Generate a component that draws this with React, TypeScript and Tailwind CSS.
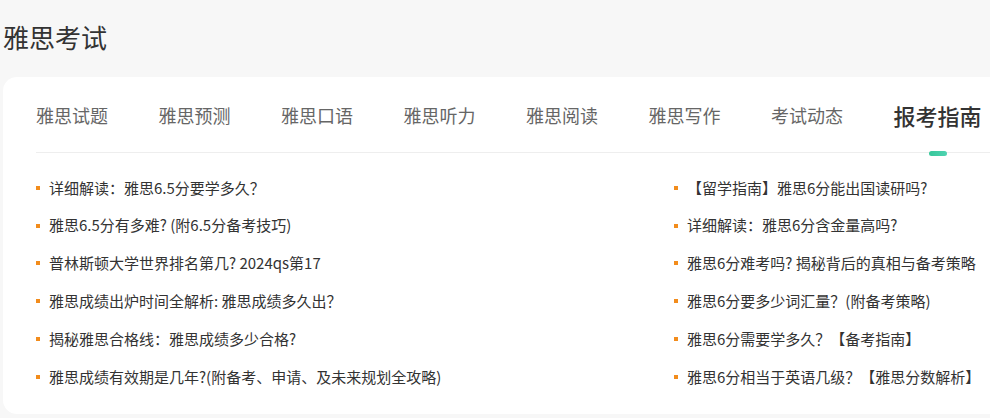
import React from "react";

const tabs = ["雅思试题", "雅思预测", "雅思口语", "雅思听力", "雅思阅读", "雅思写作", "考试动态", "报考指南"];

const left = [
  "详细解读：雅思6.5分要学多久？",
  "雅思6.5分有多难? (附6.5分备考技巧)",
  "普林斯顿大学世界排名第几? 2024qs第17",
  "雅思成绩出炉时间全解析: 雅思成绩多久出？",
  "揭秘雅思合格线：雅思成绩多少合格?",
  "雅思成绩有效期是几年?(附备考、申请、及未来规划全攻略)",
];

const right = [
  "【留学指南】雅思6分能出国读研吗?",
  "详细解读：雅思6分含金量高吗?",
  "雅思6分难考吗? 揭秘背后的真相与备考策略",
  "雅思6分要多少词汇量？(附备考策略)",
  "雅思6分需要学多久？【备考指南】",
  "雅思6分相当于英语几级？【雅思分数解析】",
];

const Item = ({ text }: { text: string }) => (
  <li className="flex items-center h-[37.8px]">
    <span className="w-[4px] h-[4px] bg-[#f28c1c] mr-[9px] shrink-0" />
    <span className="text-[15px] text-[#333] whitespace-nowrap">{text}</span>
  </li>
);

export default function App() {
  const active = 7;
  return (
    <div
      className="w-[990px] h-[418px] bg-[#f7f7f7] overflow-hidden"
      style={{ fontFamily: '"Noto Sans CJK SC", "Noto Sans", sans-serif' }}
    >
      <h1 className="pl-[3px] pt-[18px] h-[77px] text-[26px] leading-[38px] text-[#333]">雅思考试</h1>

      <div className="ml-[3px] w-[1010px] h-[337px] bg-white rounded-[14px] pl-[33px]">
        {/* tabs */}
        <div className="relative flex h-[76px] items-center border-b border-[#eee]">
          {tabs.map((t, i) => (
            <div key={t} className="w-[122.5px] shrink-0">
              <span
                className={
                  i === active
                    ? "relative inline-block text-[22px] text-[#333] font-medium leading-[30px]"
                    : "inline-block text-[18px] text-[#666] leading-[30px]"
                }
              >
                {t}
                {i === active && (
                  <span className="absolute left-1/2 -translate-x-1/2 top-[51px] w-[18px] h-[5px] rounded-full bg-gradient-to-r from-[#36c79a] to-[#4fd3b1]" />
                )}
              </span>
            </div>
          ))}
        </div>

        {/* list */}
        <div className="flex pt-[16px]">
          <ul className="w-[638px] shrink-0">
            {left.map((t) => (
              <Item key={t} text={t} />
            ))}
          </ul>
          <ul>
            {right.map((t) => (
              <Item key={t} text={t} />
            ))}
          </ul>
        </div>
      </div>
    </div>
  );
}
